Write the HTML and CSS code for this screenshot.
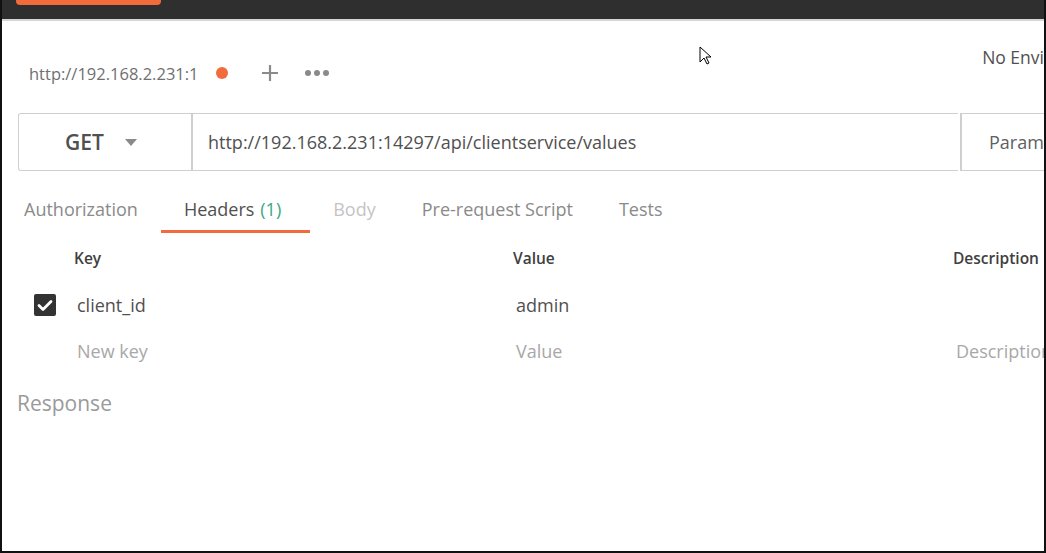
FILE: index.html
```html
<!DOCTYPE html>
<html lang="en">
<head>
    <meta charset="UTF-8">
    <title>Postman</title>
    <link rel="stylesheet" href="styles.css">
</head>
<body>
    <div class="window">
        <div class="topbar">
            <div class="topbar-btn"></div>
        </div>
        <div class="main">
            <div class="tabs-row">
                <div class="req-tab">
                    <span class="req-tab-title">http://192.168.2.231:1</span>
                    <span class="dot"></span>
                </div>
                <span class="plus">
                    <svg width="18" height="18" viewBox="0 0 18 18"><path d="M9 1v16M1 9h16" stroke="#8a8a8a" stroke-width="2.2"/></svg>
                </span>
                <span class="more">
                    <svg width="26" height="8" viewBox="0 0 26 8"><circle cx="4" cy="4" r="3" fill="#8a8a8a"/><circle cx="13" cy="4" r="3" fill="#8a8a8a"/><circle cx="22" cy="4" r="3" fill="#8a8a8a"/></svg>
                </span>
                <svg class="cursor" width="14" height="20" viewBox="0 0 14 20"><path d="M1 1v15l4-4 3 6 2-1-3-6h5z" fill="#fff" stroke="#000" stroke-width="1"/></svg>
                <span class="env">No Envi</span>
            </div>

            <div class="url-row">
                <div class="method">
                    <span>GET</span>
                    <svg width="12" height="7" viewBox="0 0 12 7"><path d="M0 0h12L6 7z" fill="#8a8a8a"/></svg>
                </div>
                <div class="url">http://192.168.2.231:14297/api/clientservice/values</div>
                <div class="params">Param</div>
            </div>

            <div class="subtabs">
                <span class="subtab">Authorization</span>
                <span class="subtab active">Headers <em>(1)</em></span>
                <span class="subtab muted">Body</span>
                <span class="subtab">Pre-request Script</span>
                <span class="subtab">Tests</span>
            </div>

            <div class="kv">
                <div class="kv-row kv-head">
                    <span class="kv-check"></span>
                    <span class="kv-key">Key</span>
                    <span class="kv-val">Value</span>
                    <span class="kv-desc">Description</span>
                </div>
                <div class="kv-row">
                    <span class="kv-check">
                        <svg width="22" height="22" viewBox="0 0 22 22"><rect width="22" height="22" rx="2" fill="#333"/><path d="M5 11.5l4 4 8-8" stroke="#fff" stroke-width="2.8" fill="none" stroke-linecap="round" stroke-linejoin="round"/></svg>
                    </span>
                    <span class="kv-key">client_id</span>
                    <span class="kv-val">admin</span>
                    <span class="kv-desc"></span>
                </div>
                <div class="kv-row placeholder">
                    <span class="kv-check"></span>
                    <span class="kv-key">New key</span>
                    <span class="kv-val">Value</span>
                    <span class="kv-desc">Description</span>
                </div>
            </div>

            <div class="response">Response</div>
        </div>
    </div>
</body>
</html>
```

FILE: styles.css
```css
html, body {
    margin: 0;
    height: 100%;
    overflow: hidden;
}

body {
    font-family: "Open Sans", "Noto Sans", sans-serif;
    background-color: #fff;
    color: #505050;
}

.window {
    height: 553px;
    box-sizing: border-box;
    border-left: 2px solid #111;
    border-right: 2px solid #111;
    border-bottom: 2px solid #111;
    overflow: hidden;
}

.topbar {
    height: 19px;
    background-color: #2f2f2f;
    border-bottom: 2px solid #d6d6d6;
    padding-left: 14px;
}

.topbar-btn {
    width: 145px;
    height: 5px;
    background-color: #f26b3a;
    border-radius: 0 0 4px 4px;
}

.main {
    padding-left: 16px;
}

.tabs-row {
    display: flex;
    align-items: center;
    height: 90px;
    position: relative;
}

.req-tab {
    display: flex;
    align-items: center;
    padding-left: 11px;
    margin-top: 14px;
}

.req-tab-title {
    font-size: 16.5px;
    color: #707070;
}

.dot {
    width: 12px;
    height: 12px;
    border-radius: 50%;
    background-color: #f26b3a;
    margin-left: 17px;
}

.plus {
    margin-left: 33px;
    margin-top: 14px;
    display: flex;
}

.more {
    margin-left: 25px;
    margin-top: 14px;
    display: flex;
}

.cursor {
    position: absolute;
    left: 681px;
    top: 25px;
}

.env {
    margin-left: auto;
    font-size: 17.5px;
    color: #505050;
    margin-top: -18px;
    white-space: nowrap;
}

.url-row {
    display: flex;
    height: 58px;
    margin-top: 2px;
}

.method {
    border: 1px solid #cfcfcf;
    border-right: 2px solid #cfcfcf;
    border-radius: 3px 0 0 3px;
    display: flex;
    align-items: center;
    justify-content: center;
    gap: 21px;
    font-size: 21px;
    font-weight: 600;
    color: #505050;
    box-sizing: border-box;
    width: 175px;
    padding-right: 8px;
}

.url {
    flex: 1;
    border-top: 1px solid #cfcfcf;
    border-bottom: 1px solid #cfcfcf;
    display: flex;
    align-items: center;
    padding-left: 15px;
    font-size: 18px;
    color: #505050;
}

.params {
    width: 55px;
    border: 1px solid #cfcfcf;
    border-left-width: 2px;
    border-right: none;
    margin-left: 2px;
    display: flex;
    align-items: center;
    padding-left: 27px;
    font-size: 18px;
    color: #606060;
    white-space: nowrap;
    overflow: hidden;
}

.subtabs {
    display: flex;
    height: 62px;
    margin-left: -17px;
}

.subtab {
    display: flex;
    align-items: flex-start;
    padding: 26px 23px 0;
    font-size: 18px;
    color: #8a8a8a;
    border-bottom: 3px solid transparent;
    box-sizing: border-box;
    height: 62px;
}

.subtab.active {
    color: #505050;
    border-bottom-color: #f26b3a;
    padding-right: 29px;
}

.subtab.active em {
    font-style: normal;
    color: #3aa885;
    margin-left: 6px;
}

.subtab.muted {
    color: #c4c4c4;
}

.kv-row {
    display: flex;
    align-items: center;
    height: 46px;
    font-size: 18px;
    color: #505050;
}

.kv-head {
    height: 49px;
    font-size: 15.5px;
    font-weight: 600;
    color: #404040;
    padding-top: 1px;
    box-sizing: border-box;
}

.kv-check {
    flex-shrink: 0;
    width: 59px;
    padding-left: 16px;
    box-sizing: border-box;
    display: flex;
}

.kv-key {
    flex-shrink: 0;
    width: 439px;
}

.kv-val {
    flex-shrink: 0;
    width: 440px;
}

.kv-head .kv-key, .kv-head .kv-val {
    margin-left: -3px;
    margin-right: 3px;
}

.kv-head .kv-val {
    margin-right: 0;
}

.kv-desc {
    flex: 1;
    white-space: nowrap;
}

.placeholder {
    color: #a8a8a8;
}

.response {
    margin-top: 15px;
    margin-left: -1px;
    font-size: 21px;
    color: #9a9a9a;
}
```
